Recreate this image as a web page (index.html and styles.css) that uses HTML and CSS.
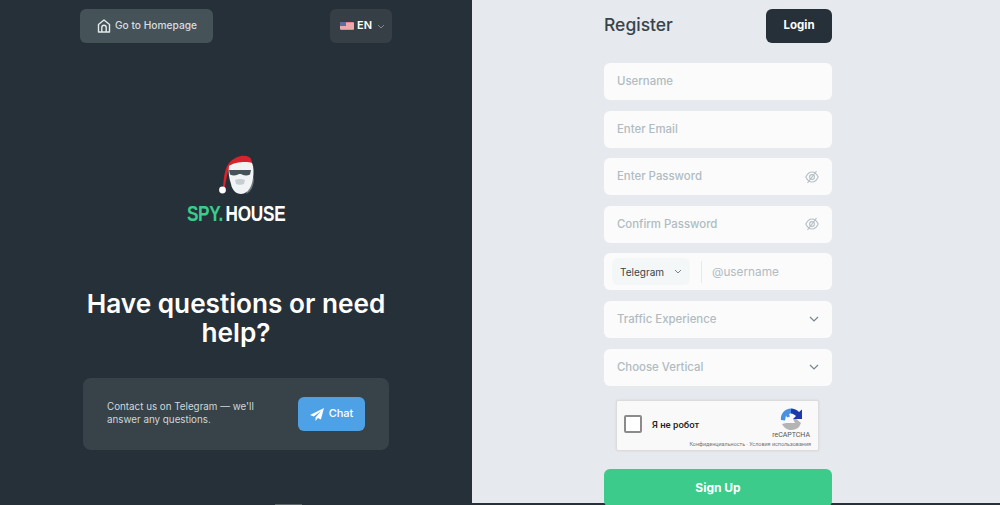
FILE: index.html

```html
<!DOCTYPE html>
<html lang="en">
<head>
  <meta charset="UTF-8" />
  <meta name="viewport" content="width=device-width, initial-scale=1.0"/>
  <title>Spy.House - Register</title>
  <link rel="stylesheet" href="styles.css">
</head>
<body>
  <div class="page">
    <section class="side">
      <div class="side-top">
        <a class="home-btn" href="#">
          <svg width="14" height="14" viewBox="0 0 14 14" fill="none" stroke="#e3eaec" stroke-width="1.400" stroke-linejoin="round"><path d="M1.500 5.500 7 1l5.500 4.500V13h-11z"/><path d="M4.800 13V8.500a2.200 2.200 0 0 1 4.400 0V13"/></svg>
          <span>Go to Homepage</span>
        </a>
        <button class="lang-btn">
          <svg width="14" height="8" viewBox="0 0 14 8"><rect width="14" height="8" rx="1" fill="#e8868c"/><path d="M0 2h14M0 4h14M0 6h14" stroke="#f3dfe0" stroke-width=".8"/><rect width="6" height="4" fill="#5a6fa0"/></svg>
          <span>EN</span>
          <svg width="8" height="5" viewBox="0 0 8 5" fill="none" stroke="#7d8b91" stroke-width="1"><path d="M1 1l3 3 3-3"/></svg>
        </button>
      </div>

      <div class="logo">
        <svg width="42" height="46" viewBox="0 0 42 46">
          <path d="M31 42c5-2 8-8 8-17l-3 6-4 8z" fill="#69787f"/>
          <path d="M8 35C9 24 10 15 15 10 20 5 28 2 34 5c2 1 3 4 3 7H16c-3 6-5 15-6 23z" fill="#d9232a"/>
          <path d="M14 14c5-4 18-5 23-3 2 4 2 13 0 20-2 7-6 11-11 11-5 0-9-4-10-10-2-6-3-12-2-18z" fill="#f1f3f4"/>
          <path d="M14 18h22l-1 4.500c-3 1.500-7 1-9-.5h-2c-2 1.500-6 2-9 .5z" fill="#46545a"/>
          <path d="M20 28c3-1.500 7-1.500 10 0l-1 4c-2 1-6 1-8 0z" fill="#c5ced1"/>
          <circle cx="7.500" cy="38" r="3.400" fill="#fff"/>
        </svg>
        <div class="logo-text"><span class="logo-spy">SPY.</span><span class="logo-house">HOUSE</span></div>
      </div>

      <h2 class="help-title">Have questions or need help?</h2>

      <div class="contact">
        <p>Contact us on Telegram — we'll answer any questions.</p>
        <a class="chat-btn" href="#">
          <svg width="14" height="13" viewBox="0 0 14 13" fill="#fff"><path d="M14 0 0 7l3.800 1.600L11 3 5.500 9.400V13l2.400-2.900 3 1.400z"/></svg>
          <span>Chat</span>
        </a>
      </div>
    </section>

    <main class="form-side">
      <div class="form-col">
        <div class="form-head">
          <h1>Register</h1>
          <a class="login-btn" href="#">Login</a>
        </div>

        <div class="field"><span>Username</span></div>
        <div class="field"><span>Enter Email</span></div>
        <div class="field"><span>Enter Password</span>
          <svg width="14" height="14" viewBox="0 0 14 14" fill="none" stroke="#b4bfc5" stroke-width="1.100"><path d="M.8 7C2.500 3.500 4.800 2 7 2s4.500 1.500 6.200 5c-1.700 3.500-4 5-6.200 5S2.500 10.500.8 7z"/><circle cx="7" cy="7" r="2.400"/><path d="M11.500 1 2.500 13"/></svg>
        </div>
        <div class="field"><span>Confirm Password</span>
          <svg width="14" height="14" viewBox="0 0 14 14" fill="none" stroke="#b4bfc5" stroke-width="1.100"><path d="M.8 7C2.500 3.500 4.800 2 7 2s4.500 1.500 6.200 5c-1.700 3.500-4 5-6.200 5S2.500 10.500.8 7z"/><circle cx="7" cy="7" r="2.400"/><path d="M11.500 1 2.500 13"/></svg>
        </div>
        <div class="field field-messenger">
          <div class="messenger"><span>Telegram</span>
            <svg width="8" height="5" viewBox="0 0 8 5" fill="none" stroke="#78858b" stroke-width="1"><path d="M1 1l3 3 3-3"/></svg>
          </div>
          <span class="handle">@username</span>
        </div>
        <div class="field"><span>Traffic Experience</span>
          <svg width="10" height="6" viewBox="0 0 10 6" fill="none" stroke="#78858b" stroke-width="1.200"><path d="M1 1l4 4 4-4"/></svg>
        </div>
        <div class="field"><span>Choose Vertical</span>
          <svg width="10" height="6" viewBox="0 0 10 6" fill="none" stroke="#78858b" stroke-width="1.200"><path d="M1 1l4 4 4-4"/></svg>
        </div>

        <div class="captcha">
          <span class="captcha-box"></span>
          <span class="captcha-label">Я не робот</span>
          <div class="captcha-brand">
            <svg width="24" height="24" viewBox="0 0 24 24">
              <path d="M20 20a10.500 10.500 0 0 1-17-3l4-1h9l-2-4 2-1 6 5z" fill="#b4b4b4"/>
              <path d="M2 13C1 7 6 1.500 12 1.500l1 4.500-3 1 1 2.500-3 1-1-2-1 5z" fill="#4a90e2"/>
              <path d="M12 1.500c3 0 6 1.500 8 3.500l3-2.500V12h-9l3-3c-1-1-3-2.500-5-2.500z" fill="#1c3aa9"/>
            </svg>
            <span class="captcha-name">reCAPTCHA</span>
          </div>
          <span class="captcha-terms">Конфиденциальность · Условия использования</span>
        </div>

        <button class="signup-btn">Sign Up</button>
      </div>
    </main>
  </div>
  <div class="scroll-mark"></div>
</body>
</html>
```

FILE: styles.css

```css
* {
  box-sizing: border-box;
}
html, body {
  margin: 0;
  height: 100%;
  overflow: hidden;
}
body {
  font-family: Inter, "Open Sans", sans-serif;
  background: #e6e9ed;
}
a {
  text-decoration: none;
}
.page {
  display: flex;
  height: 505px;
  border-bottom: 2px solid #263038;
}
.scroll-mark {
  position: absolute;
  left: 275px;
  bottom: 0;
  width: 27px;
  height: 1px;
  background: #5c666b;
}
.side {
  width: 472px;
  flex-shrink: 0;
  background: #263038;
  padding: 9px 80px 0;
  color: #fff;
}
.side-top {
  display: flex;
  justify-content: space-between;
  width: 312px;
  height: 34px;
}
.home-btn {
  display: flex;
  align-items: center;
  gap: 4px;
  width: 133px;
  padding-left: 17px;
  background: #455257;
  border-radius: 6px;
  color: #d5dee1;
  font-size: 10.200px;
  font-weight: 500;
}
.home-btn span {
  margin-bottom: 2px;
}
.lang-btn {
  display: flex;
  align-items: center;
  width: 62px;
  padding: 0 0 0 10px;
  background: #353f45;
  border: none;
  border-radius: 6px;
  color: #fff;
  font-family: inherit;
  font-size: 11px;
  font-weight: 600;
}
.lang-btn span {
  margin: 0 5px 2px 3px;
}
.logo {
  display: flex;
  flex-direction: column;
  align-items: center;
  width: 312px;
  margin-top: 109px;
}
.logo-text {
  margin-top: 6px;
  font-family: "Liberation Sans", sans-serif;
  font-size: 22px;
  font-weight: 700;
  line-height: 20px;
  letter-spacing: -0.3px;
  white-space: nowrap;
  transform: scaleX(0.78);
}
.logo-spy {
  color: #3ccb8a;
  margin-right: 3px;
}
.help-title {
  width: 312px;
  margin: 65px 0 0;
  text-align: center;
  font-size: 26.200px;
  font-weight: 600;
  line-height: 29px;
}
.contact {
  display: flex;
  align-items: center;
  justify-content: space-between;
  width: 306px;
  height: 72px;
  margin: 31px 0 0 3px;
  padding: 0 24px;
  background: #374349;
  border-radius: 8px;
}
.contact p {
  width: 165px;
  margin: 0 0 2px;
  font-size: 9.800px;
  line-height: 13.500px;
  color: #cfd8db;
}
.chat-btn {
  display: flex;
  align-items: center;
  justify-content: center;
  gap: 5px;
  width: 67px;
  height: 34px;
  background: #4fa1e6;
  border-radius: 6px;
  color: #fff;
  font-size: 11px;
  font-weight: 500;
}
.chat-btn span {
  margin-bottom: 2px;
}
.form-side {
  flex: 1;
}
.form-col {
  width: 228px;
  margin-left: 132px;
  padding-top: 9px;
}
.form-head {
  display: flex;
  align-items: center;
  justify-content: space-between;
  height: 34px;
  margin-bottom: 20px;
}
.form-head h1 {
  margin: 0 0 3px;
  font-size: 17.500px;
  font-weight: 500;
  color: #37444b;
}
.login-btn {
  display: flex;
  align-items: center;
  justify-content: center;
  width: 66px;
  height: 34px;
  padding-bottom: 3px;
  background: #263038;
  border-radius: 6px;
  color: #fff;
  font-size: 11.500px;
  font-weight: 700;
}
.field {
  display: flex;
  align-items: center;
  justify-content: space-between;
  height: 37px;
  margin-bottom: 10.600px;
  padding: 0 13px;
  background: #fbfbfb;
  border-radius: 6px;
  color: #b0bbc2;
  font-size: 11.400px;
  font-weight: 500;
}
.field > span {
  margin-bottom: 1px;
}
.field-messenger {
  justify-content: flex-start;
  padding: 0 8px;
}
.messenger {
  display: flex;
  align-items: center;
  justify-content: space-between;
  width: 78px;
  height: 27px;
  padding: 0 8px;
  background: #f4f7f8;
  border-radius: 6px;
  color: #37444b;
  font-size: 10px;
  font-weight: 400;
}
.field > .handle {
  margin: 0 0 0 11px;
  padding-left: 10px;
  border-left: 1px solid #e6e9ed;
  line-height: 22px;
  font-size: 11.800px;
  font-weight: 400;
}
.captcha {
  position: relative;
  display: flex;
  align-items: flex-start;
  width: 203px;
  height: 51px;
  margin: 14px 0 18px 12px;
  background: #f9f9f9;
  border: 1px solid #dcdcdc;
  border-radius: 2px;
  box-shadow: 0 0 3px rgba(0,0,0,0.08);
  font-family: Roboto, sans-serif;
}
.captcha-box {
  width: 18px;
  height: 18px;
  margin: 14px 0 0 7px;
  background: #fff;
  border: 2px solid #8b8b8b;
  border-radius: 2px;
}
.captcha-label {
  margin: 18px 0 0 10px;
  font-size: 9.500px;
  font-weight: 500;
  color: #222;
}
.captcha-brand {
  position: absolute;
  right: 8px;
  top: 6px;
  display: flex;
  flex-direction: column;
  align-items: center;
  color: #555;
}
.captcha-name {
  font-size: 7px;
  line-height: 9px;
}
.captcha-terms {
  position: absolute;
  right: 7px;
  bottom: 3px;
  font-size: 5.400px;
  color: #777;
  white-space: nowrap;
}
.signup-btn {
  display: block;
  width: 100%;
  height: 38px;
  padding-bottom: 1px;
  background: #3ccb8a;
  border: none;
  border-radius: 6px;
  color: #fff;
  font-family: inherit;
  font-size: 12px;
  font-weight: 700;
}
```
